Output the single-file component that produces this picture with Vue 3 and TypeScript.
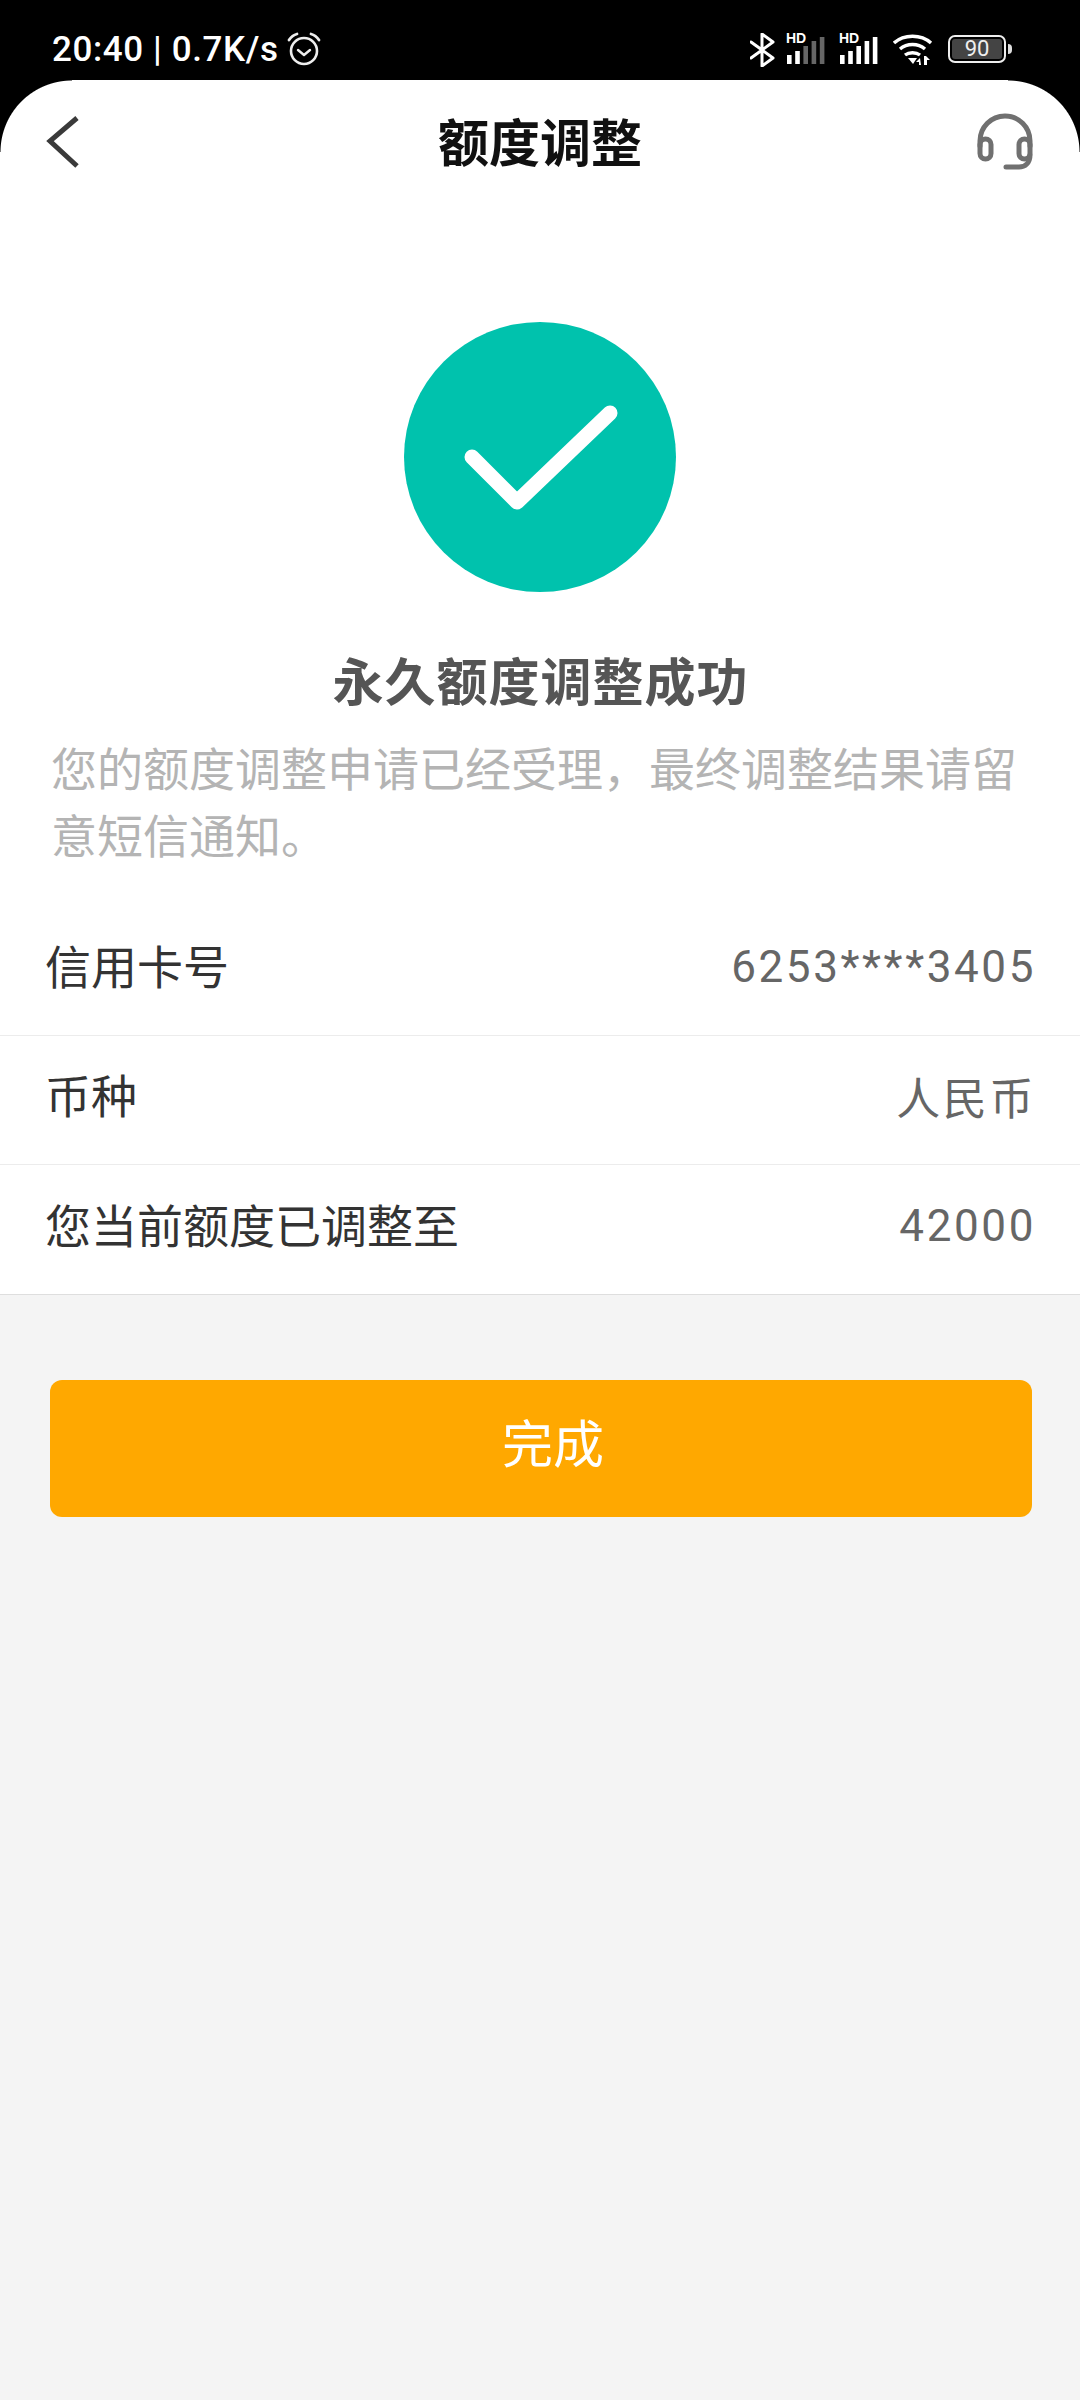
<script setup lang="ts">
interface InfoRow {
  label: string
  value: string
}

const rows: InfoRow[] = [
  { label: '信用卡号', value: '6253****3405' },
  { label: '币种', value: '人民币' },
  { label: '您当前额度已调整至', value: '42000' },
]

const dimBars = [false, false, true, true, true]
const fullBars = [false, false, false, false, false]
</script>

<template>
  <div class="screen">
    <div class="status">
      <span class="clock">20:40 | 0.7K/s</span>
      <svg class="alarm" width="36" height="36" viewBox="0 0 36 36" fill="none" stroke="#eee">
        <circle cx="18" cy="20" r="13" stroke-width="2.6" />
        <path d="M12 19l6 5 6-5" stroke-width="2.4" stroke-linecap="round" stroke-linejoin="round" />
        <path d="M3 9c2-3 4-5 8-6M33 9c-2-3-4-5-8-6" stroke-width="2.8" stroke-linecap="round" />
      </svg>
      <div class="status-right">
        <svg class="bt" width="26" height="34" viewBox="0 0 26 34" fill="none" stroke="#fff" stroke-width="3">
          <path d="M1 9l22 16-11 8V1l11 8L1 25" stroke-linejoin="round" stroke-linecap="round" />
        </svg>
        <svg
          v-for="(bars, s) in [dimBars, fullBars]"
          :key="s"
          class="signal"
          width="40"
          height="32"
          viewBox="0 0 40 32"
        >
          <text x="0" y="10" class="hd">HD</text>
          <rect
            v-for="(dim, i) in bars"
            :key="i"
            :x="1 + i * 8.2"
            :y="[22, 18, 13, 8, 4][i]"
            width="4.6"
            :height="[9, 13, 18, 23, 27][i]"
            :fill="dim ? '#666' : '#fff'"
          />
        </svg>
        <svg class="wifi" width="40" height="32" viewBox="0 0 40 32" fill="none" stroke="#fff" stroke-width="3.4">
          <path d="M1 9c10-9 27-9 37 0M7 15c7-6 18-6 25 0M12 21c4-3 11-3 15 0" />
          <path d="M15 24h9l-4 6z" fill="#fff" stroke="none" />
          <path d="M27 24l-4 4h3v3h2zM31 22h2l4 4h-3v5h-3z" fill="#fff" stroke="none" />
        </svg>
        <div class="battery">
          <div class="battery-body"><span class="battery-num">90</span></div>
          <span class="battery-tip"></span>
        </div>
      </div>
    </div>

    <div class="card">
      <div class="nav">
        <svg class="back" width="34" height="52" viewBox="0 0 34 52" fill="none" stroke="#3a3a3a" stroke-width="5">
          <path d="M31 2L4 25l27 25" />
        </svg>
        <span class="nav-title">额度调整</span>
        <svg class="support" width="58" height="58" viewBox="0 0 58 58" fill="none" stroke="#707070" stroke-width="5" stroke-linecap="round">
          <path d="M4 33V28a25 25 0 0 1 50 0v5" />
          <rect x="4" y="26" width="11" height="20" rx="5.5" />
          <rect x="43" y="26" width="11" height="20" rx="5.5" />
          <path d="M54 42c0 8-5 12-11 12H30" />
        </svg>
      </div>

      <div class="result">
        <svg class="ok" width="272" height="270" viewBox="0 0 272 270" fill="none">
          <ellipse cx="136" cy="135" rx="136" ry="135" fill="#00c2ad" />
          <path d="M68 135l45 45 93-89" stroke="#fff" stroke-width="15" stroke-linecap="round" stroke-linejoin="round" />
        </svg>
        <h1 class="result-title">永久额度调整成功</h1>
        <p class="result-desc">您的额度调整申请已经受理，最终调整结果请留意短信通知。</p>
      </div>

      <div class="rows">
        <div v-for="row in rows" :key="row.label" class="row">
          <span class="row-label">{{ row.label }}</span>
          <span class="row-value">{{ row.value }}</span>
        </div>
      </div>
    </div>

    <div class="actions">
      <button class="done">完成</button>
    </div>
  </div>
</template>

<style>
html,
body {
  margin: 0;
  background: #f4f4f4;
}
</style>

<style scoped>
.screen {
  width: 1080px;
  height: 2400px;
  overflow: hidden;
  background: #f4f4f4;
  font-family: Roboto, 'Noto Sans CJK SC', sans-serif;
}

.status {
  height: 80px;
  box-sizing: border-box;
  padding: 30px 0 0 52px;
  display: flex;
  align-items: flex-start;
  background: #000;
  color: #fff;
}

.clock {
  font-size: 35px;
  line-height: 40px;
  font-weight: 500;
  letter-spacing: 0.6px;
}

.alarm {
  margin: 1px 0 0 7px;
}

.status-right {
  margin-left: auto;
  padding-right: 68px;
  display: flex;
  align-items: flex-start;
  gap: 12px;
}

.bt {
  margin: 3px -4px 0 0;
}

.signal {
  margin: 3px 2px 0;
  overflow: visible;
}

.signal + .signal {
  margin-left: -1px;
}

.hd {
  font-family: 'Liberation Sans', sans-serif;
  font-size: 14px;
  font-weight: 700;
  fill: #fff;
}

.wifi {
  margin: 4px 3px 0 0;
}

.battery {
  display: flex;
  align-items: center;
  height: 28px;
  margin-top: 5px;
}

.battery-body {
  width: 58px;
  height: 28px;
  box-sizing: border-box;
  border: 2px solid #eee;
  border-radius: 7px;
  padding: 2px;
  display: flex;
}

.battery-num {
  flex: 1;
  background: #444;
  border-radius: 3px;
  text-align: center;
  font-size: 22px;
  line-height: 20px;
  color: #eee;
}

.battery-tip {
  width: 4px;
  height: 10px;
  margin-left: 2px;
  background: #ddd;
  border-radius: 0 4px 4px 0;
}

.card {
  height: 1215px;
  box-sizing: border-box;
  background: #fff;
  border-bottom: 1px solid #dedede;
  position: relative;
}

.card::before,
.card::after {
  content: '';
  position: absolute;
  top: 0;
  width: 72px;
  height: 72px;
  background: #000;
}

.card::before {
  left: 0;
  -webkit-mask: radial-gradient(circle at 72px 72px, transparent 71px, #000 72px);
  mask: radial-gradient(circle at 72px 72px, transparent 71px, #000 72px);
}

.card::after {
  right: 0;
  -webkit-mask: radial-gradient(circle at 0 72px, transparent 71px, #000 72px);
  mask: radial-gradient(circle at 0 72px, transparent 71px, #000 72px);
}

.nav {
  height: 124px;
  display: grid;
  grid-template-columns: 1fr auto 1fr;
  align-items: center;
  padding: 0 46px;
  position: relative;
  z-index: 1;
}

.support {
  justify-self: end;
}

.nav-title {
  font-size: 51px;
  line-height: 60px;
  margin-top: 6px;
  font-weight: 700;
  color: #111;
}

.result {
  padding: 118px 50px 0 51px;
  display: flex;
  flex-direction: column;
  align-items: center;
}

.ok {
  margin-right: 1px;
}

.result-title {
  margin: 56px 0 0;
  font-size: 51px;
  line-height: 72px;
  font-weight: 700;
  letter-spacing: 1px;
  color: #555;
}

.result-desc {
  margin: 17px 0 0;
  width: 100%;
  font-size: 46px;
  line-height: 67px;
  color: #b4b4b4;
}

.rows {
  margin-top: 36px;
}

.row {
  height: 129px;
  box-sizing: border-box;
  padding: 0 44px 14px 45px;
  border-bottom: 1px solid #ececec;
  display: flex;
  align-items: center;
  justify-content: space-between;
}

.row:last-child {
  border-bottom: 0;
}

.row-label {
  font-size: 46px;
  color: #333;
}

.row-value {
  font-size: 44px;
  margin-top: 6px;
  letter-spacing: 2.6px;
  color: #666;
}

.actions {
  padding: 85px 48px 0 50px;
}

.done {
  width: 100%;
  height: 137px;
  display: block;
  border: 0;
  border-radius: 12px;
  padding: 0 0 16px 24px;
  background: #ffa800;
  color: #fff;
  font-family: inherit;
  font-size: 51px;
}
</style>
